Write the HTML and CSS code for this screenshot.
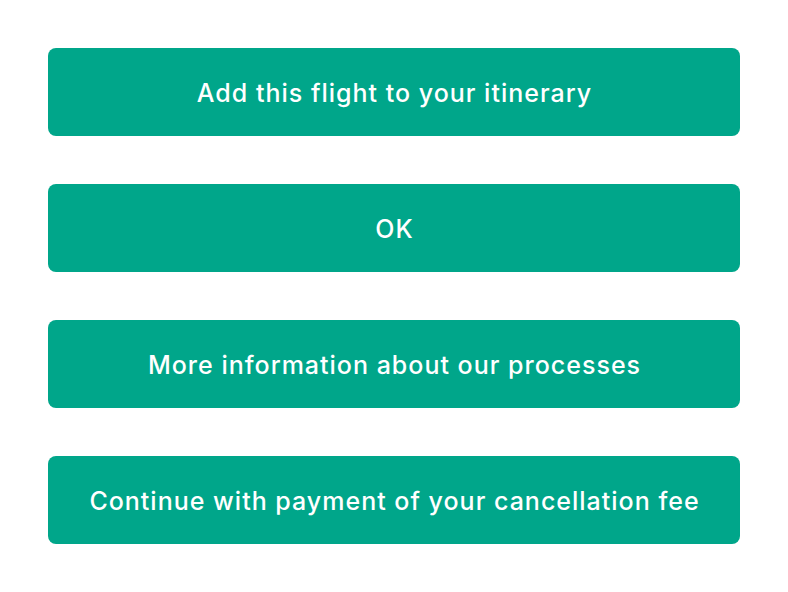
FILE: index.html
```html
<!DOCTYPE html>
<html>
<head>
<meta charset="utf-8">
<link rel="stylesheet" href="styles.css">
</head>
<body>
<div class="stack">
  <button class="btn">Add this flight to your itinerary</button>
  <button class="btn">OK</button>
  <button class="btn">More information about our processes</button>
  <button class="btn">Continue with payment of your cancellation fee</button>
</div>
</body>
</html>
```
FILE: styles.css
```css
html, body { margin: 0; padding: 0; background: #ffffff; }
.stack {
  display: flex;
  flex-direction: column;
  gap: 48px;
  padding: 48px 48px 0 48px;
}
.btn {
  height: 88px;
  width: 692px;
  border: none;
  border-radius: 8px;
  background: #00a68a;
  color: #ffffff;
  font-family: "Inter", sans-serif;
  font-weight: 500;
  font-size: 25px;
  letter-spacing: 1px;
  padding: 2px 0 0 1px;
  margin: 0;
}
```
